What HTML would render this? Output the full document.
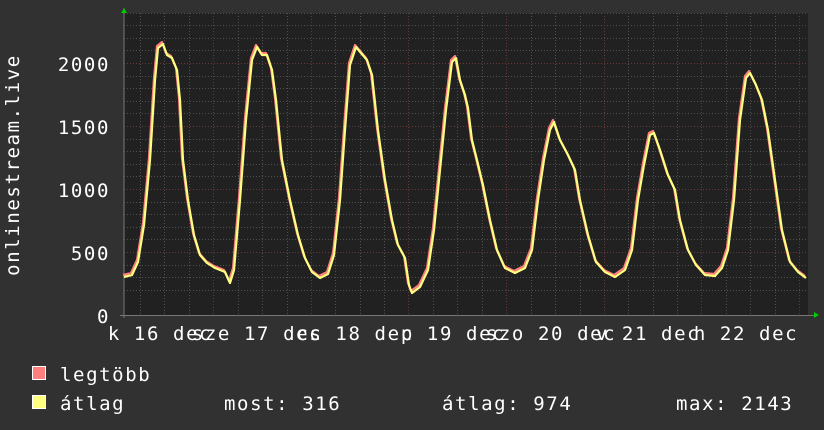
<!DOCTYPE html>
<html><head><style>
html,body{margin:0;padding:0;background:#313131;}
svg{display:block}
text{font-family:"DejaVu Sans Mono","Liberation Mono",monospace;fill:#fff;letter-spacing:1.6px;}
</style></head><body>
<svg width="824" height="430" viewBox="0 0 824 430" xmlns="http://www.w3.org/2000/svg">
<rect x="0" y="0" width="824" height="430" fill="#313131"/>
<rect x="124" y="13" width="684" height="302" fill="#212121"/>
<g stroke="#505050" stroke-width="1" stroke-dasharray="1,2">
<line x1="124" y1="290.5" x2="808" y2="290.5"/><line x1="124" y1="277.5" x2="808" y2="277.5"/><line x1="124" y1="265.5" x2="808" y2="265.5"/>
<line x1="124" y1="239.5" x2="808" y2="239.5"/><line x1="124" y1="227.5" x2="808" y2="227.5"/><line x1="124" y1="214.5" x2="808" y2="214.5"/><line x1="124" y1="202.5" x2="808" y2="202.5"/>
<line x1="124" y1="176.5" x2="808" y2="176.5"/><line x1="124" y1="164.5" x2="808" y2="164.5"/><line x1="124" y1="151.5" x2="808" y2="151.5"/><line x1="124" y1="139.5" x2="808" y2="139.5"/>
<line x1="124" y1="113.5" x2="808" y2="113.5"/><line x1="124" y1="101.5" x2="808" y2="101.5"/><line x1="124" y1="88.5" x2="808" y2="88.5"/><line x1="124" y1="76.5" x2="808" y2="76.5"/>
<line x1="124" y1="50.5" x2="808" y2="50.5"/><line x1="124" y1="38.5" x2="808" y2="38.5"/><line x1="124" y1="25.5" x2="808" y2="25.5"/><line x1="124" y1="13.5" x2="808" y2="13.5"/>
<line x1="140.5" y1="13" x2="140.5" y2="315"/><line x1="164.5" y1="13" x2="164.5" y2="315"/><line x1="189.5" y1="13" x2="189.5" y2="315"/>
<line x1="238.5" y1="13" x2="238.5" y2="315"/><line x1="262.5" y1="13" x2="262.5" y2="315"/><line x1="287.5" y1="13" x2="287.5" y2="315"/>
<line x1="335.5" y1="13" x2="335.5" y2="315"/><line x1="360.5" y1="13" x2="360.5" y2="315"/><line x1="384.5" y1="13" x2="384.5" y2="315"/>
<line x1="433.5" y1="13" x2="433.5" y2="315"/><line x1="457.5" y1="13" x2="457.5" y2="315"/><line x1="482.5" y1="13" x2="482.5" y2="315"/>
<line x1="531.5" y1="13" x2="531.5" y2="315"/><line x1="555.5" y1="13" x2="555.5" y2="315"/><line x1="580.5" y1="13" x2="580.5" y2="315"/>
<line x1="628.5" y1="13" x2="628.5" y2="315"/><line x1="653.5" y1="13" x2="653.5" y2="315"/><line x1="677.5" y1="13" x2="677.5" y2="315"/>
<line x1="726.5" y1="13" x2="726.5" y2="315"/><line x1="750.5" y1="13" x2="750.5" y2="315"/><line x1="775.5" y1="13" x2="775.5" y2="315"/>
</g>
<g stroke="#6a3838" stroke-width="1" stroke-dasharray="1,2">
<line x1="124" y1="252.5" x2="808" y2="252.5"/><line x1="124" y1="189.5" x2="808" y2="189.5"/><line x1="124" y1="126.5" x2="808" y2="126.5"/><line x1="124" y1="63.5" x2="808" y2="63.5"/>
<line x1="213.5" y1="13" x2="213.5" y2="315"/><line x1="311.5" y1="13" x2="311.5" y2="315"/><line x1="408.5" y1="13" x2="408.5" y2="315"/><line x1="506.5" y1="13" x2="506.5" y2="315"/><line x1="604.5" y1="13" x2="604.5" y2="315"/><line x1="701.5" y1="13" x2="701.5" y2="315"/><line x1="799.5" y1="13" x2="799.5" y2="315"/>
</g>
<line x1="124" y1="8" x2="124" y2="318" stroke="#777"/>
<line x1="120" y1="315.5" x2="814" y2="315.5" stroke="#777"/>
<polygon points="121,13 127,13 124,8" fill="#00cc00"/>
<polygon points="814,312 814,318 819,315" fill="#00cc00"/>
<g fill="none" stroke-linejoin="round">
<polyline stroke="#ff7f7f" stroke-width="2.2" transform="translate(-1,-2)" points="124,277 132,275 138,262 144,225 150,160 155,80 158,48 163,44 167,55 172,58 177,70 180,100 183,160 188,200 194,235 200,255 207,263 215,268 225,272 230,283 234,270 240,200 246,120 252,60 257,47 262,55 267,55 272,70 276,100 282,160 290,200 298,235 305,258 312,272 320,278 328,274 334,255 340,200 345,130 350,65 356,47 361,53 367,60 372,75 378,130 385,180 392,220 398,245 405,258 409,285 412,293 420,287 428,270 434,230 440,170 446,110 452,62 456,58 460,80 465,95 468,108 472,140 477,160 483,185 490,220 497,250 505,268 515,273 525,268 532,250 538,200 544,160 550,130 554,122 560,140 568,155 575,170 580,200 588,235 596,262 605,272 615,277 625,270 632,250 638,200 644,165 650,135 654,133 660,150 668,175 675,190 680,220 688,250 696,265 705,275 715,276 722,268 728,250 734,200 740,120 746,78 750,73 756,85 762,100 768,130 775,180 782,230 790,262 798,272 806,278"/>
<polyline stroke="#ffff80" stroke-width="2.2" points="124,277 132,275 138,262 144,225 150,160 155,80 158,48 163,44 167,55 172,58 177,70 180,100 183,160 188,200 194,235 200,255 207,263 215,268 225,272 230,283 234,270 240,200 246,120 252,60 257,47 262,55 267,55 272,70 276,100 282,160 290,200 298,235 305,258 312,272 320,278 328,274 334,255 340,200 345,130 350,65 356,47 361,53 367,60 372,75 378,130 385,180 392,220 398,245 405,258 409,285 412,293 420,287 428,270 434,230 440,170 446,110 452,62 456,58 460,80 465,95 468,108 472,140 477,160 483,185 490,220 497,250 505,268 515,273 525,268 532,250 538,200 544,160 550,130 554,122 560,140 568,155 575,170 580,200 588,235 596,262 605,272 615,277 625,270 632,250 638,200 644,165 650,135 654,133 660,150 668,175 675,190 680,220 688,250 696,265 705,275 715,276 722,268 728,250 734,200 740,120 746,78 750,73 756,85 762,100 768,130 775,180 782,230 790,262 798,272 806,278"/>
</g>
<g font-size="19" text-anchor="end">
<text x="110" y="71">2000</text><text x="110" y="134">1500</text><text x="110" y="197">1000</text><text x="110" y="260">500</text><text x="110" y="323">0</text>
</g>
<text font-size="19" text-anchor="middle" transform="translate(19,165) rotate(-90)">onlinestream.live</text>
<g font-size="19" text-anchor="middle">
<text x="160" y="340">k 16 dec</text>
<text x="257" y="340">sze 17 dec</text>
<text x="355" y="340">cs 18 dec</text>
<text x="453" y="340">p 19 dec</text>
<text x="551" y="340">szo 20 dec</text>
<text x="648" y="340">v 21 dec</text>
<text x="746" y="340">h 22 dec</text>
</g>
<rect x="32.5" y="366.5" width="13" height="13" fill="#ff7f7f" stroke="#fff" stroke-width="1"/>
<rect x="32.5" y="395.5" width="13" height="13" fill="#ffff80" stroke="#fff" stroke-width="1"/>
<g font-size="19">
<text x="60" y="381">legtöbb</text>
<text x="60" y="410">átlag</text>
<text x="224" y="410">most: 316</text>
<text x="442" y="410">átlag: 974</text>
<text x="676" y="410">max: 2143</text>
</g>
</svg>
</body></html>
